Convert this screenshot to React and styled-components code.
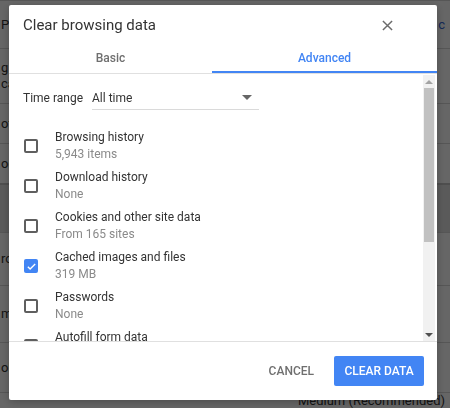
import React, { useState } from 'react'
import styled, { createGlobalStyle } from 'styled-components'

const GlobalStyle = createGlobalStyle`
  html, body {
    margin: 0;
    padding: 0;
    width: 450px;
    height: 408px;
    overflow: hidden;
    font-family: Roboto, "Liberation Sans", sans-serif;
  }
`

const items = [
  { id: 'history', title: 'Browsing history', sub: '5,943 items', checked: false },
  { id: 'downloads', title: 'Download history', sub: 'None', checked: false },
  { id: 'cookies', title: 'Cookies and other site data', sub: 'From 165 sites', checked: false },
  { id: 'cache', title: 'Cached images and files', sub: '319 MB', checked: true },
  { id: 'passwords', title: 'Passwords', sub: 'None', checked: false },
  { id: 'autofill', title: 'Autofill form data', sub: '2 suggestions', checked: false },
]

// settings page rows sitting behind the dialog
const pageRows = [
  { h: 48, left: 'P', right: 'o c' },
  { h: 55, left: 'g\nca' },
  { h: 40, left: 'otl' },
  { h: 40, left: 'oo' },
  { gap: true, h: 47 },
  { h: 53, left: 'ro' },
  { h: 57, left: 'me' },
  { h: 50, left: 'ok' },
  { h: 18, right: 'Medium (Recommended)', bottom: true },
]

const Check = ({ checked }) => (
  <Box checked={checked}>
    {checked && (
      <svg width="11" height="11" viewBox="0 0 24 24">
        <path d="M4 12.5l5 5L20 6.5" fill="none" stroke="#fff" strokeWidth="3" />
      </svg>
    )}
  </Box>
)

const App = () => {
  const [tab, setTab] = useState('advanced')
  const [checks, setChecks] = useState(items.map(i => i.checked))

  const toggle = (idx) => {
    setChecks(checks.map((c, i) => (i === idx ? !c : c)))
  }

  return (
    <>
      <GlobalStyle />
      <Page>
        {pageRows.map((r, i) =>
          r.gap ? (
            <PageGap key={i} style={{ height: r.h }} />
          ) : (
            <PageRow key={i} style={{ height: r.h }} bottom={r.bottom}>
              <PageLeft>{r.left}</PageLeft>
              <PageRight bottom={r.bottom}>{r.right}</PageRight>
            </PageRow>
          )
        )}
      </Page>
      <Scrim />

      <Dialog>
        <Header>
          <Title>Clear browsing data</Title>
          <CloseButton aria-label="Close">
            <svg width="11" height="11" viewBox="0 0 12 12">
              <path d="M1 1l10 10M11 1L1 11" stroke="#6b6b6b" strokeWidth="1.6" />
            </svg>
          </CloseButton>
        </Header>

        <Tabs>
          <Tab grow={203} active={tab === 'basic'} onClick={() => setTab('basic')}>Basic</Tab>
          <Tab grow={225} active={tab === 'advanced'} onClick={() => setTab('advanced')}>Advanced</Tab>
        </Tabs>

        <Body>
          <List>
            <TimeRow>
              <TimeLabel>Time range</TimeLabel>
              <Select>
                <span>All time</span>
                <Caret />
              </Select>
            </TimeRow>

            {items.map((item, i) => (
              <Item key={item.id} onClick={() => toggle(i)}>
                <Check checked={checks[i]} />
                <ItemText>
                  <ItemTitle>{item.title}</ItemTitle>
                  <ItemSub>{item.sub}</ItemSub>
                </ItemText>
              </Item>
            ))}
          </List>

          <Scrollbar>
            <Arrow up />
            <Thumb />
            <Track />
            <Arrow />
          </Scrollbar>
        </Body>

        <Footer>
          <TextButton>Cancel</TextButton>
          <PrimaryButton>Clear data</PrimaryButton>
        </Footer>
      </Dialog>
    </>
  )
}

export default App

const Page = styled.div`
  width: 450px;
  height: 408px;
  background: #eeeeee;
  display: flex;
  flex-direction: column;
  overflow: hidden;
`

const PageRow = styled.div`
  background: #fff;
  border-top: 1px solid #d6d6d6;
  display: flex;
  justify-content: space-between;
  align-items: ${p => (p.bottom ? 'flex-start' : 'center')};
  font-size: 13px;
  color: #333;
  flex-shrink: 0;
  box-sizing: border-box;
`

const PageGap = styled.div`
  background: #e2e2e2;
  border-top: 2px solid #c4c4c4;
  flex-shrink: 0;
`

const PageLeft = styled.div`
  padding-left: 1px;
  white-space: pre;
  line-height: 16px;
`

const PageRight = styled.div`
  padding-right: 5px;
  color: ${p => (p.bottom ? '#333' : '#3367d6')};
  white-space: nowrap;
`

const Scrim = styled.div`
  position: fixed;
  inset: 0;
  background: rgba(0, 0, 0, 0.6);
`

const Dialog = styled.div`
  position: fixed;
  left: 9px;
  top: 5px;
  width: 428px;
  height: 395px;
  background: #fff;
  border-radius: 2px;
  box-shadow: 0 2px 8px rgba(0, 0, 0, 0.25);
  display: flex;
  flex-direction: column;
`

const Header = styled.div`
  height: 40px;
  padding: 0 44px 0 14px;
  display: flex;
  align-items: center;
  justify-content: space-between;
  flex-shrink: 0;
`

const Title = styled.h1`
  margin: 0;
  font-size: 15px;
  font-weight: 400;
  color: #333;
`

const CloseButton = styled.button`
  border: none;
  background: none;
  padding: 0;
  width: 12px;
  height: 12px;
  display: flex;
  align-items: center;
  justify-content: center;
  cursor: pointer;
`

const Tabs = styled.div`
  display: flex;
  border-bottom: 1px solid #e0e0e0;
  flex-shrink: 0;
`

const Tab = styled.div`
  flex: ${p => p.grow} 1 0;
  height: 28px;
  box-sizing: border-box;
  display: flex;
  align-items: center;
  justify-content: center;
  font-size: 12px;
  font-weight: 500;
  color: ${p => (p.active ? '#4285f4' : '#6f6f6f')};
  border-bottom: 2px solid ${p => (p.active ? '#4285f4' : 'transparent')};
  cursor: pointer;
`

const Body = styled.div`
  flex: 1;
  display: flex;
  min-height: 0;
  border-bottom: 1px solid #e0e0e0;
  padding-right: 2px;
`

const List = styled.div`
  flex: 1;
  padding-left: 14px;
  overflow: hidden;
`

const TimeRow = styled.div`
  display: flex;
  align-items: center;
  height: 24px;
  margin-top: 12px;
  margin-bottom: 16px;
`

const TimeLabel = styled.div`
  width: 69px;
  font-size: 12px;
  color: #333;
`

const Select = styled.div`
  width: 167px;
  height: 24px;
  box-sizing: border-box;
  border-bottom: 1px solid #dadada;
  display: flex;
  align-items: center;
  justify-content: space-between;
  padding-right: 7px;
  font-size: 12px;
  color: #333;
`

const Caret = styled.div`
  width: 0;
  height: 0;
  border-left: 5px solid transparent;
  border-right: 5px solid transparent;
  border-top: 5px solid #666;
`

const Item = styled.div`
  display: flex;
  align-items: center;
  height: 40px;
  cursor: pointer;
`

const Box = styled.div`
  width: 14px;
  height: 14px;
  box-sizing: border-box;
  margin-left: 1px;
  margin-right: 17px;
  border-radius: 2px;
  border: ${p => (p.checked ? 'none' : '2px solid #5f5f5f')};
  background: ${p => (p.checked ? '#4285f4' : 'transparent')};
  display: flex;
  align-items: center;
  justify-content: center;
  flex-shrink: 0;
`

const ItemText = styled.div`
  display: flex;
  flex-direction: column;
`

const ItemTitle = styled.div`
  font-size: 12px;
  line-height: 17px;
  color: #333;
`

const ItemSub = styled.div`
  font-size: 12px;
  line-height: 17px;
  color: #8a8a8a;
`

const Scrollbar = styled.div`
  width: 12px;
  margin-top: 1px;
  background: #f1f1f1;
  display: flex;
  flex-direction: column;
  align-items: center;
`

const Arrow = styled.div`
  height: 13px;
  width: 12px;
  flex-shrink: 0;
  display: flex;
  align-items: center;
  justify-content: center;
  &::after {
    content: '';
    border-left: 4px solid transparent;
    border-right: 4px solid transparent;
    ${p => (p.up ? 'border-bottom: 4px solid #a3a3a3;' : 'border-top: 4px solid #505050;')}
  }
`

const Thumb = styled.div`
  width: 10px;
  height: 154px;
  background: #c1c1c1;
  flex-shrink: 0;
`

const Track = styled.div`
  flex: 1;
`

const Footer = styled.div`
  height: 58px;
  flex-shrink: 0;
  display: flex;
  align-items: center;
  justify-content: flex-end;
  padding-right: 13px;
  gap: 8px;
`

const TextButton = styled.button`
  border: none;
  background: none;
  height: 30px;
  padding: 0 12px;
  font-family: inherit;
  font-size: 12px;
  font-weight: 500;
  text-transform: uppercase;
  color: #6f6f6f;
  cursor: pointer;
`

const PrimaryButton = styled.button`
  border: none;
  border-radius: 2px;
  background: #4285f4;
  height: 30px;
  width: 90px;
  padding: 0;
  font-family: inherit;
  font-size: 12px;
  font-weight: 500;
  text-transform: uppercase;
  color: #fff;
  cursor: pointer;
`
